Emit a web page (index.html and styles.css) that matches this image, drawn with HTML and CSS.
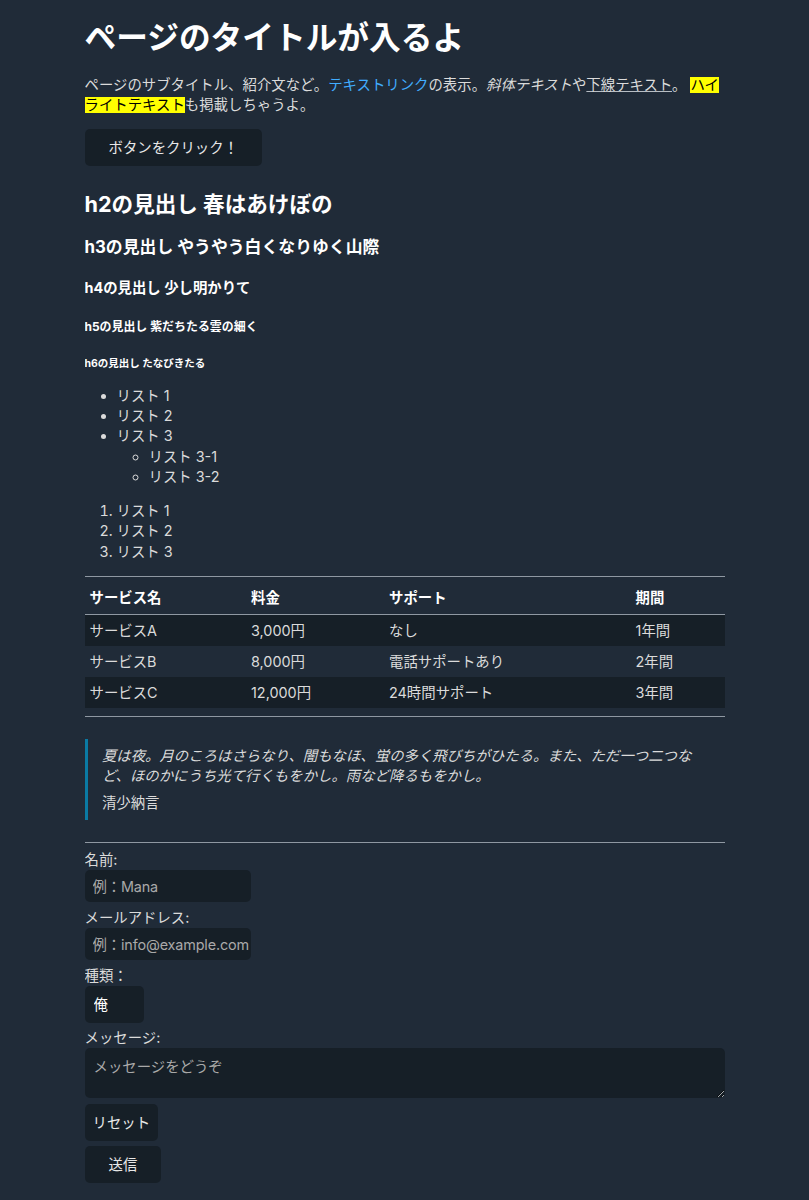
FILE: index.html
```html
<!DOCTYPE html>
<html lang="ja">
<head>
<meta charset="utf-8">
<title>ページのタイトルが入るよ</title>
<link rel="stylesheet" href="styles.css">
</head>
<body>
<h1 class="title">ページのタイトルが入るよ</h1>
<p class="lead">ページのサブタイトル、紹介文など。<a class="link" href="#">テキストリンク</a>の表示。<em>斜体テキスト</em>や<u>下線テキスト</u>。 <mark class="hl">ハイライトテキスト</mark>も掲載しちゃうよ。</p>
<button class="btn btn-wide" type="button">ボタンをクリック！</button>

<h2 class="h2">h2の見出し 春はあけぼの</h2>
<h3 class="h3">h3の見出し やうやう白くなりゆく山際</h3>
<h4 class="h4">h4の見出し 少し明かりて</h4>
<h5 class="h5">h5の見出し 紫だちたる雲の細く</h5>
<h6 class="h6">h6の見出し たなびきたる</h6>

<ul class="list">
  <li>リスト 1</li>
  <li>リスト 2</li>
  <li>リスト 3
    <ul class="list sub">
      <li>リスト 3-1</li>
      <li>リスト 3-2</li>
    </ul>
  </li>
</ul>
<ol class="list">
  <li>リスト 1</li>
  <li>リスト 2</li>
  <li>リスト 3</li>
</ol>

<table class="tbl">
  <thead>
    <tr><th>サービス名</th><th>料金</th><th>サポート</th><th>期間</th></tr>
  </thead>
  <tbody>
    <tr class="alt"><td>サービスA</td><td>3,000円</td><td>なし</td><td>1年間</td></tr>
    <tr><td>サービスB</td><td>8,000円</td><td>電話サポートあり</td><td>2年間</td></tr>
    <tr class="alt"><td>サービスC</td><td>12,000円</td><td>24時間サポート</td><td>3年間</td></tr>
  </tbody>
</table>
<hr class="rule">

<blockquote class="quote">
  <p class="quote-text">夏は夜。月のころはさらなり、闇もなほ、蛍の多く飛びちがひたる。また、ただ一つ二つなど、ほのかにうち光て行くもをかし。雨など降るもをかし。</p>
  <footer class="quote-by">清少納言</footer>
</blockquote>
<hr class="rule">

<form class="form">
  <label class="lbl" for="name">名前:</label>
  <input class="field" id="name" type="text" placeholder="例：Mana">
  <label class="lbl" for="mail">メールアドレス:</label>
  <input class="field" id="mail" type="email" placeholder="例：info@example.com">
  <label class="lbl" for="kind">種類：</label>
  <select class="sel" id="kind"><option>俺</option></select>
  <label class="lbl" for="msg">メッセージ:</label>
  <textarea class="area" id="msg" placeholder="メッセージをどうぞ"></textarea>
  <input class="btn btn-plain" type="reset" value="リセット">
  <button class="btn btn-wide" type="submit">送信</button>
</form>
</body>
</html>
```

FILE: styles.css
```css
html {
  background: #202b38;
}
body {
  max-width: 640px;
  margin: 16px auto;
  padding: 0;
  background: #202b38;
  color: #dbdbdb;
  font-family: Inter, "Noto Sans CJK JP", sans-serif;
  font-size: 14.4px;
  line-height: 1.4;
}

.title, .h2, .h3, .h4, .h5, .h6 {
  color: #fff;
  font-weight: 700;
  line-height: 1.4;
}
.title {
  font-size: 31.7px;
  margin: 0 0 9.6px;
}
.lead {
  margin: 14.4px 0;
}
.link {
  color: #41adff;
  text-decoration: none;
}
.lead u {
  text-decoration-color: #b8bec4;
}
.hl {
  color: #000;
  background: linear-gradient(transparent 1.2px, #ffff00 1.2px, #ffff00 16.6px, transparent 16.6px);
  -webkit-box-decoration-break: clone;
  box-decoration-break: clone;
}

.btn {
  display: block;
  font-family: inherit;
  font-size: 14.4px;
  line-height: 21px;
  color: #e8e8e8;
  background: #161f27;
  border: none;
  border-radius: 5px;
  padding: 8px 24px;
  margin: 0 0 5px;
  cursor: pointer;
}
.btn-plain {
  padding: 8px 8px;
}

.h2 { font-size: 21.6px; margin: 23px 0 9.6px; }
.h3 { font-size: 16.85px; margin: 16.6px 0 9.6px; }
.h4 { font-size: 14.4px; margin: 18.4px 0 9.6px; }
.h5 { font-size: 11.95px; margin: 20.3px 0 9.6px; }
.h6 { font-size: 10.5px; margin: 21.6px 0 9.6px; }

.list {
  margin: 14.4px 0;
  padding-left: 32px;
}
.list.sub {
  margin: 0;
  list-style: circle;
}

.tbl {
  width: 100%;
  border-collapse: collapse;
  border-top: 1px solid #8f98a2;
  margin: 0 0 8px;
}
.tbl thead {
  border-bottom: 1px solid #8f98a2;
}
.tbl th {
  color: #fff;
  font-weight: 700;
  text-align: left;
  vertical-align: bottom;
  padding: 11px 5px 6px;
  line-height: 20px;
}
.tbl td {
  text-align: left;
  padding: 5.5px 5px;
  line-height: 20px;
}
.tbl .alt {
  background: #161f27;
}

.rule {
  border: none;
  border-top: 1px solid #8f98a2;
  margin: 7.2px 0;
  height: 0;
}

.quote {
  margin: 21.6px 0;
  padding: 7.2px 14.4px;
  border-left: 3.2px solid #0a7aa3;
}
.quote-text {
  margin: 0 0 7px;
  font-style: italic;
  line-height: 20px;
}
.quote-by {
  line-height: 20px;
}

.form {
  margin: 0;
}
.lbl {
  display: block;
  line-height: 20px;
}
.field, .sel, .area {
  display: block;
  font-family: inherit;
  font-size: 14.4px;
  color: #fff;
  background: #161f27;
  border: none;
  border-radius: 5px;
  outline: none;
  margin: 0 0 5.5px;
  box-sizing: border-box;
}
.field {
  width: 166px;
  padding: 8px 1px 8px 8px;
  line-height: 16px;
  height: 32.5px;
  letter-spacing: -0.15px;
}
.field::placeholder, .area::placeholder {
  color: #a9a9a9;
}
.sel {
  -webkit-appearance: none;
  appearance: none;
  width: 59px;
  height: 37px;
  padding: 8px 9px;
  line-height: 21px;
}
.area {
  width: 100%;
  height: 50px;
  padding: 8px 9px;
  line-height: 22px;
  resize: vertical;
}
```
